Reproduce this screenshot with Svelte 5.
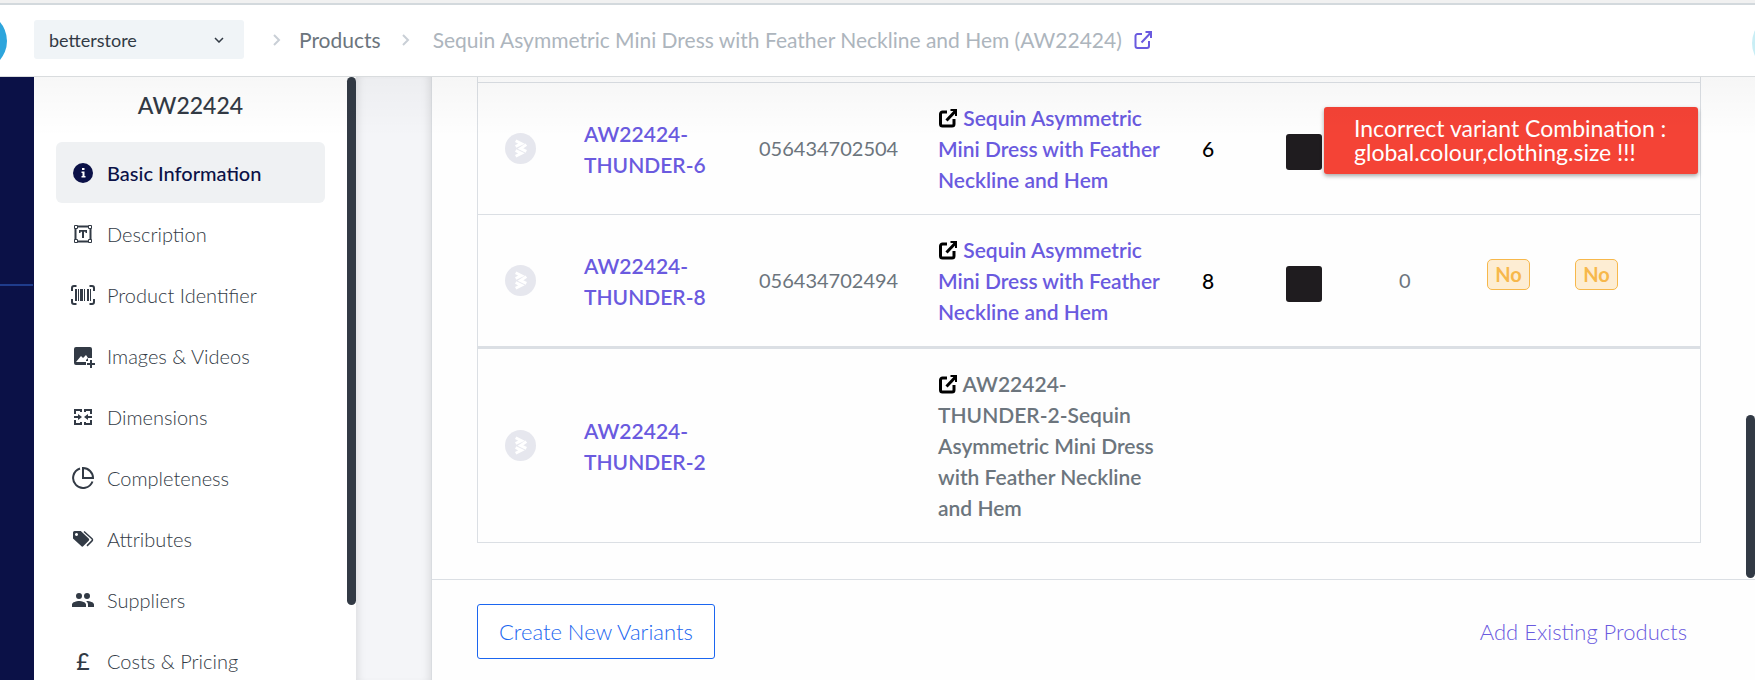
<script>
	let store = 'betterstore';

	const menu = [
		{ icon: 'info', label: 'Basic Information', active: true },
		{ icon: 'description', label: 'Description' },
		{ icon: 'barcode', label: 'Product Identifier' },
		{ icon: 'image', label: 'Images & Videos' },
		{ icon: 'dimensions', label: 'Dimensions' },
		{ icon: 'pie', label: 'Completeness' },
		{ icon: 'tags', label: 'Attributes' },
		{ icon: 'people', label: 'Suppliers' },
		{ icon: 'pound', label: 'Costs & Pricing' }
	];

	const dressName = 'Sequin Asymmetric Mini Dress with Feather Neckline and Hem';

	const variants = [
		{ code: 'AW22424-THUNDER-6', barcode: '056434702504', name: dressName, size: '6', linked: true },
		{
			code: 'AW22424-THUNDER-8',
			barcode: '056434702494',
			name: dressName,
			size: '8',
			stock: '0',
			flags: ['No', 'No'],
			linked: true
		},
		{ code: 'AW22424-THUNDER-2', name: 'AW22424-THUNDER-2-' + dressName, orphan: true }
	];
</script>

{#snippet external()}
	<svg class="external" viewBox="0 0 20 20" aria-hidden="true">
		<path d="M9 4H4.500A2 2 0 0 0 2.500 6V16A2 2 0 0 0 4.500 18H14A2 2 0 0 0 16 16V11" />
		<path d="M8.500 12.500L17 3.500" />
		<path class="head" d="M12.500 1H19V8H17V4.800L15.200 3H12.500Z" />
	</svg>
{/snippet}

{#snippet chevron()}
	<svg class="chevron" viewBox="0 0 8 12" aria-hidden="true"><path d="M1 1L6 6L1 11" /></svg>
{/snippet}

<div class="page">
	<header>
		<span class="logo"></span>
		<span class="store">
			<select bind:value={store} aria-label="Store">
				<option value="betterstore">betterstore</option>
			</select>
			<svg viewBox="0 0 10 6" aria-hidden="true"><path d="M1 1L5 5L9 1" /></svg>
		</span>
		<nav class="crumbs" aria-label="Breadcrumb">
			{@render chevron()}
			<a class="parent" href="#products">Products</a>
			{@render chevron()}
			<span class="current">{dressName} (AW22424)</span>
			<a class="open" href="#open" aria-label="Open product">{@render external()}</a>
		</nav>
		<span class="avatar"></span>
	</header>

	<div class="body">
		<div class="rail"><hr /></div>

		<aside>
			<h1>AW22424</h1>
			<nav aria-label="Product sections">
				{#each menu as item}
					<a href="#{item.icon}" class="item" class:active={item.active}>
						{#if item.icon == 'pound'}
							<span class="icon pound" aria-hidden="true">£</span>
						{:else}
							<svg class="icon" viewBox="0 0 24 24" aria-hidden="true">
								{#if item.icon == 'info'}
									<circle cx="12" cy="12" r="10" />
									<path class="cut" d="M11 7h2.500v2H11zM10.500 10.500h3V15h1v1.500h-4V15h1v-3h-1z" />
								{:else if item.icon == 'description'}
									<path class="line" d="M6 4.500h12M6 19.500h12M4.500 6v12M19.500 6v12" />
									<path class="thin" d="M3.500 3.500h3v3h-3zM17.500 3.500h3v3h-3zM3.500 17.500h3v3h-3zM17.500 17.500h3v3h-3z" />
									<path d="M8 8h8v3h-1.500V9.800h-1.500V16h-2V9.800H9.500V11H8z" />
								{:else if item.icon == 'barcode'}
									<path class="line" d="M5.500 3H3a2 2 0 0 0-2 2v3M18.500 3H21a2 2 0 0 1 2 2v3M5.500 21H3a2 2 0 0 1-2-2v-3M18.500 21H21a2 2 0 0 0 2-2v-3" />
									<path d="M4 6h2v12H4zM7 6h1v12H7zM9 6h3v12H9zM13 6h1v12h-1zM16 6h2v12h-2zM19 6h1v12h-1z" />
								{:else if item.icon == 'image'}
									<path d="M5 3h14a2 2 0 0 1 2 2v9h-4v3h-2v4H5a2 2 0 0 1-2-2V5a2 2 0 0 1 2-2zM5 18h10v-2l2-2-2-3-3 3-2-2z" fill-rule="evenodd" />
									<path class="line" d="M20 16v8M16 20h8" />
								{:else if item.icon == 'dimensions'}
									<path class="line" d="M4 9V5h6v2M4 15v4h6v-2M20 9V5h-6v2M20 15v4h-6v-2M3 12h6M21 12h-6" />
									<path d="M7 9l4 3-4 3zM17 9l-4 3 4 3z" />
								{:else if item.icon == 'pie'}
									<path class="line" d="M9 2.500A10 10 0 1 0 21.500 15.500" />
									<path class="line" d="M12 2V12H22A10 10 0 0 0 12 2z" />
								{:else if item.icon == 'tags'}
									<path d="M2 5.500A1.500 1.500 0 0 1 3.500 4h6.300l7.900 7.600a1.500 1.500 0 0 1 0 2.200l-5.300 5.300a1.500 1.500 0 0 1-2.200 0L2 11.500zM5.500 6a1.500 1.500 0 1 0 .01 0z" fill-rule="evenodd" />
									<path class="thin open-end" d="M13 4.500l8 7.200a1.500 1.500 0 0 1 0 2.200l-5 5" />
								{:else}
									<path d="M16 11a3 3 0 1 0 0-6 3 3 0 0 0 0 6zM8 11a3 3 0 1 0 0-6 3 3 0 0 0 0 6zM8 13c-2.330 0-7 1.170-7 3.500V19h14v-2.500C15 14.170 10.330 13 8 13zM16 13c-.290 0-.620.020-.970.050 1.160.840 1.970 1.970 1.970 3.450V19h6v-2.500c0-2.330-4.670-3.500-7-3.500z" />
								{/if}
							</svg>
						{/if}
						{item.label}
					</a>
				{/each}
			</nav>
			<span class="thumb"></span>
		</aside>

		<div class="gutter"></div>

		<main>
			<div class="scroll">
				<div class="variants">
					<table aria-label="Variants">
						<colgroup>
							<col class="c-icon" />
							<col class="c-code" />
							<col class="c-barcode" />
							<col class="c-name" />
							<col class="c-size" />
							<col class="c-colour" />
							<col class="c-stock" />
							<col class="c-flag" />
							<col class="c-end" />
						</colgroup>
						<tbody>
							{#each variants as variant}
								<tr class:orphan={variant.orphan}>
									<td class="status">
										<svg class="mark" viewBox="0 0 32 32" aria-hidden="true">
											<circle cx="16" cy="16" r="16" />
											<path d="M11 8L17 11L11 14M22 12L16 16L22 19M11 18L17 21L11 24" />
										</svg>
									</td>
									<td><a class="code" href="#variant">{variant.code}</a></td>
									<td class="number">{variant.barcode ?? ''}</td>
									<td class="name">
										{@render external()}
										{#if variant.linked}
											<a href="#variant">{variant.name}</a>
										{:else}
											{variant.name}
										{/if}
									</td>
									<td class="size">{variant.size ?? ''}</td>
									<td>{#if variant.size}<span class="swatch"></span>{/if}</td>
									<td class="number">{variant.stock ?? ''}</td>
									<td>{#if variant.flags}<span class="badge">{variant.flags[0]}</span>{/if}</td>
									<td>{#if variant.flags}<span class="badge">{variant.flags[1]}</span>{/if}</td>
								</tr>
							{/each}
						</tbody>
					</table>
					<div class="toast" role="alert">
						Incorrect variant Combination :<br />global.colour,clothing.size !!!
					</div>
				</div>
				<span class="thumb"></span>
			</div>
			<footer>
				<button type="button">Create New Variants</button>
				<a href="#existing">Add Existing Products</a>
			</footer>
		</main>
	</div>
</div>

<style>
	:global(body) {
		background: #fff;
	}

	.page {
		display: flex;
		flex-direction: column;
		height: 100vh;
		overflow: hidden;
		font-family: Lato, 'Liberation Sans', sans-serif;
		font-size: 21px;
		font-weight: 400;
		color: #323a45;
	}

	.page * {
		box-sizing: border-box;
	}

	a {
		color: #6a5adf;
		text-decoration: none;
	}

	/* top bar */
	header {
		position: relative;
		flex: none;
		display: flex;
		align-items: center;
		height: 77px;
		padding: 0 34px;
		border-top: 3px solid #f1f1f1;
		border-bottom: 1px solid #d9dcde;
		box-shadow: inset 0 2px #d3d9dd;
		overflow: hidden;
	}

	.logo,
	.avatar {
		position: absolute;
		width: 58px;
		height: 58px;
		border-radius: 50%;
	}

	.logo {
		left: -51px;
		top: 9px;
		background: #2da5dc;
	}

	.avatar {
		right: -55px;
		top: 11px;
		background: #c9eef5;
	}

	.store {
		position: relative;
		flex: none;
		width: 210px;
	}

	.store select {
		appearance: none;
		width: 100%;
		height: 39px;
		padding: 0 15px;
		border: 0;
		border-radius: 3px;
		background: #f0f4f7;
		color: #323a45;
		font: inherit;
		font-size: 18px;
	}

	.store svg {
		position: absolute;
		right: 20px;
		top: 17px;
		width: 10px;
		height: 6px;
		fill: none;
		stroke: #323a45;
		stroke-width: 1.5;
		pointer-events: none;
	}

	.crumbs {
		display: flex;
		align-items: center;
		margin-left: 29px;
		white-space: nowrap;
	}

	.chevron {
		width: 8px;
		height: 12px;
		fill: none;
		stroke: #c9cfd6;
		stroke-width: 2;
	}

	.parent {
		margin: 0 21px 0 18px;
		color: #6c757d;
	}

	.current {
		margin-left: 23px;
		color: #adb5bd;
	}

	.open {
		display: flex;
		margin-left: 11px;
	}

	.external {
		width: 20px;
		height: 20px;
		fill: none;
		stroke: currentColor;
		stroke-width: 2;
	}

	.external .head {
		fill: currentColor;
		stroke: none;
	}

	/* columns under the bar */
	.body {
		position: relative;
		flex: 1;
		min-height: 0;
		display: flex;
	}

	.body::before {
		content: '';
		position: absolute;
		z-index: 1;
		inset: 0 0 auto 34px;
		height: 60px;
		background: linear-gradient(rgba(0, 0, 0, 0.03), transparent);
		pointer-events: none;
	}

	.rail {
		flex: none;
		width: 34px;
		background: #0b1147;
	}

	.rail hr {
		margin: 207px 1px 0 0;
		border: 0;
		border-top: 2px solid #1f3c8c;
	}

	aside {
		position: relative;
		flex: none;
		width: 322px;
		padding: 0 31px 0 22px;
		overflow: hidden;
	}

	h1 {
		margin: 0;
		padding-top: 12px;
		height: 65px;
		font-size: 23px;
		font-weight: 500;
		line-height: 32px;
		text-align: center;
	}

	.item {
		display: flex;
		align-items: center;
		gap: 12px;
		height: 61px;
		padding-left: 15px;
		border-radius: 6px;
		color: #323a45;
		font-size: 20px;
		font-weight: 300;
	}

	.item.active {
		background: #eff1f3;
		color: #0b1147;
		font-weight: 500;
	}

	.icon {
		flex: none;
		width: 24px;
		height: 24px;
		fill: currentColor;
	}

	.icon .cut {
		fill: #fff;
	}

	.icon .line,
	.icon .thin {
		fill: none;
		stroke: currentColor;
		stroke-width: 2;
	}

	.icon .thin {
		fill: #fff;
		stroke-width: 1;
	}

	.icon .open-end {
		fill: none;
		stroke-width: 1.5;
	}

	.pound {
		height: auto;
		font-size: 23px;
		font-weight: 500;
		text-align: center;
	}

	.thumb {
		position: absolute;
		right: 0;
		width: 9px;
		border-radius: 5px;
		background: #323a45;
	}

	aside .thumb {
		top: 0;
		height: 528px;
	}

	.scroll .thumb {
		bottom: 1px;
		height: 163px;
	}

	.gutter {
		flex: none;
		width: 76px;
		border-right: 1px solid #d9dce0;
		background: #f4f5f8;
		box-shadow:
			inset 8px 0 8px -6px rgba(0, 0, 0, 0.1),
			inset -8px 0 8px -6px rgba(0, 0, 0, 0.1);
	}

	main {
		flex: 1;
		min-width: 0;
		display: flex;
		flex-direction: column;
		background: #fefefe;
	}

	.scroll {
		position: relative;
		flex: 1;
		min-height: 0;
		padding: 0 54px 0 45px;
	}

	.variants {
		position: relative;
		padding-top: 5px;
		border: 1px solid #dbdfe4;
		border-top: 0;
	}

	table {
		width: 100%;
		border-collapse: separate;
		border-spacing: 0;
		table-layout: fixed;
		line-height: 31px;
		color: #6c757d;
	}

	td {
		padding: 19px 0 19px 28px;
		border-top: 1px solid #dbdfe4;
		vertical-align: middle;
	}

	.orphan td {
		border-top-width: 3px;
	}

	.c-icon {
		width: 78px;
	}

	.c-code {
		width: 175px;
	}

	.c-barcode {
		width: 179px;
	}

	.c-size {
		width: 84px;
	}

	.c-colour {
		width: 113px;
	}

	.c-stock,
	.c-flag {
		width: 88px;
	}

	.c-end {
		width: 153px;
	}

	.c-name {
		width: auto;
	}

	.status {
		padding-left: 27px;
	}

	.mark {
		display: block;
		width: 31px;
		height: 31px;
		fill: #e6e7ee;
	}

	.mark path {
		fill: none;
		stroke: #fff;
		stroke-width: 3;
	}

	.code,
	.name {
		font-weight: 600;
	}

	.code {
		display: block;
		width: 130px;
	}

	.number {
		font-size: 20px;
	}

	.name {
		padding-right: 4px;
	}

	.name .external {
		vertical-align: -2px;
		color: #000;
		stroke-width: 3;
	}

	.size {
		font-weight: 500;
		color: #000;
	}

	.swatch {
		display: block;
		width: 36px;
		height: 36px;
		margin-top: 6px;
		border-radius: 3px;
		background: #1f1c1f;
	}

	.badge {
		display: inline-block;
		width: 43px;
		margin-bottom: 12px;
		border: 1px solid #f7b84b;
		border-radius: 5px;
		background: #fdedd3;
		color: #f7b84b;
		font-size: 20px;
		font-weight: 700;
		line-height: 29px;
		text-align: center;
		vertical-align: middle;
	}

	.toast {
		position: absolute;
		top: 30px;
		right: 2px;
		width: 374px;
		padding: 9px 12px 10px 30px;
		border-radius: 3px;
		background: #f44336;
		box-shadow: 0 2px 4px rgba(0, 0, 0, 0.35);
		color: #fff;
		font-size: 23px;
		line-height: 24px;
		white-space: nowrap;
	}

	footer {
		flex: none;
		display: flex;
		align-items: center;
		justify-content: space-between;
		height: 101px;
		padding: 2px 68px 0 45px;
		border-top: 1px solid #dbdfe4;
		font-size: 22px;
		font-weight: 300;
	}

	footer button {
		height: 55px;
		padding: 0 21px;
		border: 1px solid #1b66f0;
		border-radius: 3px;
		background: #fff;
		color: #1b66f0;
		font: inherit;
	}
</style>
